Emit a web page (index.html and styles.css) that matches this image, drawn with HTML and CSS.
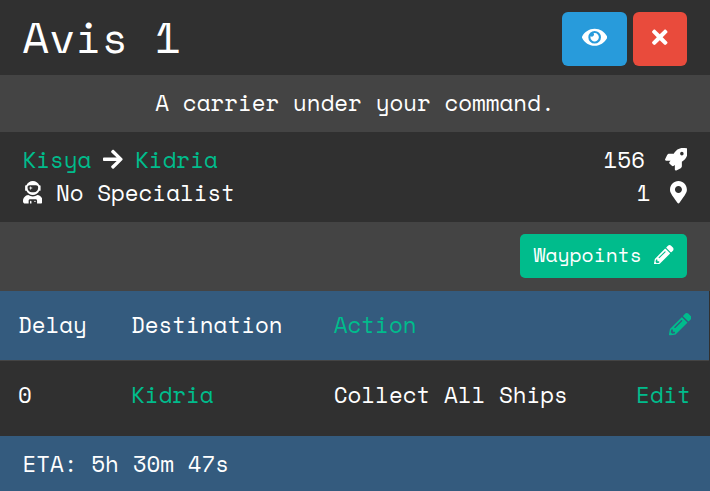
FILE: index.html
```html
<!DOCTYPE html>
<html lang="en">
<head>
<meta charset="utf-8">
<title>Avis 1</title>
<link rel="stylesheet" href="styles.css">
</head>
<body>
<svg class="sprite" aria-hidden="true">
  <symbol id="pencil" viewBox="0 0 512 512"><path d="M497.9 142.1l-46.1 46.1c-4.7 4.7-12.3 4.7-17 0l-111-111c-4.7-4.7-4.7-12.3 0-17l46.1-46.1c18.7-18.7 49.1-18.7 67.9 0l60.1 60.1c18.8 18.7 18.8 49.1 0 67.9zM284.2 99.8L21.6 362.4.4 483.9c-2.9 16.4 11.4 30.6 27.8 27.8l121.5-21.3 262.6-262.6c4.7-4.7 4.7-12.3 0-17l-111-111c-4.8-4.7-12.4-4.7-17.1 0zM124.1 339.9c-5.5-5.5-5.5-14.3 0-19.8l154-154c5.5-5.5 14.3-5.5 19.8 0s5.5 14.3 0 19.8l-154 154c-5.5 5.5-14.3 5.5-19.8 0zM88 424h48v36.3l-64.5 11.3-31.1-31.1L51.7 376H88v48z"/></symbol>
</svg>
<header class="title-bar">
  <h1 class="title">Avis 1</h1>
  <div class="actions">
    <button class="btn btn-view" aria-label="View"><svg class="icon icon-eye" viewBox="0 0 576 512"><path d="M572.52 241.4C518.29 135.59 410.93 64 288 64S57.68 135.64 3.48 241.41a32.35 32.35 0 0 0 0 29.19C57.71 376.41 165.07 448 288 448s230.32-71.64 284.52-177.41a32.35 32.35 0 0 0 0-29.19zM288 400a144 144 0 1 1 144-144 143.93 143.93 0 0 1-144 144zm0-240a95.31 95.31 0 0 0-25.31 3.79 47.85 47.85 0 0 1-66.9 66.9A95.78 95.78 0 1 0 288 160z"/></svg></button>
    <button class="btn btn-close" aria-label="Close"><svg class="icon icon-times" viewBox="0 0 352 512"><path d="M242.72 256l100.07-100.07c12.28-12.28 12.28-32.19 0-44.48l-22.24-22.24c-12.28-12.28-32.19-12.28-44.48 0L176 189.28 75.93 89.21c-12.28-12.28-32.19-12.28-44.48 0L9.21 111.45c-12.28 12.28-12.28 32.19 0 44.48L109.28 256 9.21 356.07c-12.28 12.28-12.28 32.19 0 44.48l22.24 22.24c12.28 12.28 32.2 12.28 44.48 0L176 322.72l100.07 100.07c12.28 12.28 32.2 12.28 44.48 0l22.24-22.24c12.28-12.28 12.28-32.19 0-44.48L242.72 256z"/></svg></button>
  </div>
</header>
<p class="description">A carrier under your command.</p>
<section class="summary">
  <div class="line">
    <div class="route"><a class="link">Kisya</a><svg class="icon icon-448" viewBox="0 0 448 512"><path d="M190.5 66.9l22.2-22.2c9.4-9.4 24.6-9.4 33.9 0L441 239c9.4 9.4 9.4 24.6 0 33.9L246.6 467.3c-9.4 9.4-24.6 9.4-33.9 0l-22.2-22.2c-9.5-9.5-9.3-25 .4-34.3L311.4 296H24c-13.3 0-24-10.7-24-24v-32c0-13.3 10.7-24 24-24h287.4L190.9 101.2c-9.8-9.3-10-24.8-.4-34.3z"/></svg><a class="link">Kidria</a></div>
    <div class="stat"><span>156</span><svg class="icon" viewBox="0 0 512 512"><path d="M505.12 19.094c-1.19-5.531-6.658-11-12.207-12.188C460.716 0 435.507 0 410.407 0 307.175 0 245.27 55.203 199.052 128H94.838c-16.348.016-35.557 11.875-42.887 26.484L2.516 253.297A28.4 28.4 0 0 0 0 264a24.009 24.009 0 0 0 24.006 24h103.81l-22.475 22.469c-11.365 11.361-12.996 32.258 0 45.25l50.905 50.906c11.156 11.188 32.156 13.156 45.277 0l22.475-22.469V488a24.009 24.009 0 0 0 24.006 24 28.559 28.559 0 0 0 10.707-2.516l98.728-49.39c14.629-7.297 26.508-26.5 26.508-42.86V312.797c72.598-46.313 128.035-108.406 128.035-211.094.093-25.203.093-50.406-6.862-82.609zM384.04 168A40 40 0 1 1 424.05 128a40.023 40.023 0 0 1-40.01 40z"/></svg></div>
  </div>
  <div class="line">
    <div class="specialist"><svg class="icon icon-448" viewBox="0 0 448 512"><path d="M64 224h13.5c24.7 56.5 80.9 96 146.5 96s121.8-39.5 146.5-96H384c8.8 0 16-7.2 16-16v-96c0-8.8-7.2-16-16-16h-13.5C345.8 39.5 289.6 0 224 0S102.2 39.5 77.5 96H64c-8.8 0-16 7.2-16 16v96c0 8.8 7.2 16 16 16zm40-88c0-22.1 21.5-40 48-40h144c26.5 0 48 17.9 48 40v24c0 53-43 96-96 96h-48c-53 0-96-43-96-96v-24zm72 72l12-36 36-12-36-12-12-36-12 36-36 12 36 12 12 36zm151.6 113.4C297.7 340.7 262.2 352 224 352s-73.7-11.3-103.6-30.6C52.9 328.5 0 385 0 454.4v9.6c0 26.5 21.5 48 48 48h80v-64c0-17.7 14.3-32 32-32h128c17.7 0 32 14.3 32 32v64h80c26.5 0 48-21.5 48-48v-9.6c0-69.4-52.9-125.9-120.4-133zM272 448c-8.8 0-16 7.2-16 16s7.2 16 16 16 16-7.2 16-16-7.2-16-16-16zm-96 0c-8.8 0-16 7.2-16 16v48h32v-48c0-8.8-7.2-16-16-16z"/></svg><span>No Specialist</span></div>
    <div class="stat"><span>1</span><svg class="icon icon-marker" viewBox="0 0 384 512"><path d="M172.268 501.67C26.97 291.031 0 269.413 0 192 0 85.961 85.961 0 192 0s192 85.961 192 192c0 77.413-26.97 99.031-172.268 309.67-9.535 13.774-29.93 13.773-39.464 0zM192 272c44.183 0 80-35.817 80-80s-35.817-80-80-80-80 35.817-80 80 35.817 80 80 80z"/></svg></div>
  </div>
</section>
<div class="toolbar">
  <button class="btn btn-waypoints"><span>Waypoints</span><svg class="icon icon-small"><use href="#pencil"/></svg></button>
</div>
<div class="table">
  <div class="row head">
    <span>Delay</span><span>Destination</span><a class="link">Action</a><a class="link last"><svg class="icon"><use href="#pencil"/></svg></a>
  </div>
  <div class="row">
    <span>0</span><a class="link">Kidria</a><span>Collect All Ships</span><a class="link last">Edit</a>
  </div>
</div>
<footer class="eta">ETA: 5h 30m 47s</footer>
</body>
</html>
```
FILE: styles.css
```css
* { box-sizing: border-box; }
body {
  margin: 0;
  background: #303030;
  color: #fff;
  font-family: "Space Mono", "Liberation Mono", monospace;
  font-size: 22.5px;
  line-height: 33px;
  white-space: nowrap;
}
.sprite { display: none; }
.icon { display: block; width: 22.5px; height: 22.5px; fill: currentColor; flex: none; }
.icon-448 { width: 19.7px; }
.icon-eye { width: 25.3px; }
.icon-times { width: 15.5px; }
.icon-marker { width: 16.9px; }
.icon-small { width: 19.7px; height: 19.7px; }
.link { color: #00bc8c; }
.title-bar {
  display: flex;
  justify-content: space-between;
  align-items: center;
  height: 75px;
  padding: 3px 23px 0 22.5px;
}
.title { margin: 0; padding-bottom: 4px; font-size: 43.2px; font-weight: 400; line-height: 54px; }
.actions { display: flex; gap: 6px; }
.btn {
  display: flex;
  align-items: center;
  justify-content: center;
  border: 0;
  border-radius: 6px;
  padding: 0;
  color: #fff;
  font: inherit;
}
.btn-view { width: 65px; height: 54px; padding-bottom: 3px; background: #289bdb; }
.btn-close { width: 54px; height: 54px; padding-bottom: 3px; background: #e94b3c; }
.description {
  margin: 0;
  height: 57px;
  background: #444;
  text-align: center;
  line-height: 56px;
}
.summary { height: 90px; padding: 11px 23px 0 22.5px; }
.line { display: flex; justify-content: space-between; height: 33px; }
.route, .specialist, .stat { display: flex; align-items: center; }
.route { gap: 12px; }
.specialist { gap: 13.8px; }
.stat { gap: 19.6px; }
.toolbar {
  display: flex;
  justify-content: flex-end;
  align-items: flex-start;
  height: 69px;
  padding: 12px 23px 0;
  background: #444;
}
.btn-waypoints {
  gap: 12px;
  width: 167px;
  height: 44px;
  border-radius: 5px;
  padding-bottom: 3px;
  background: #00bc8c;
  font-size: 19.7px;
}
.table { width: 709px; }
.row {
  display: grid;
  grid-template-columns: 113px 202.8px 1fr auto;
  align-items: center;
  height: 75px;
  padding: 0 18px 8px 18px;
}
.head { height: 70px; padding-bottom: 2px; border-bottom: 1px solid #444; background: #345b7e; }
.last { justify-self: end; }
.eta { height: 55px; padding-left: 22.5px; background: #345b7e; line-height: 56px; }
```
